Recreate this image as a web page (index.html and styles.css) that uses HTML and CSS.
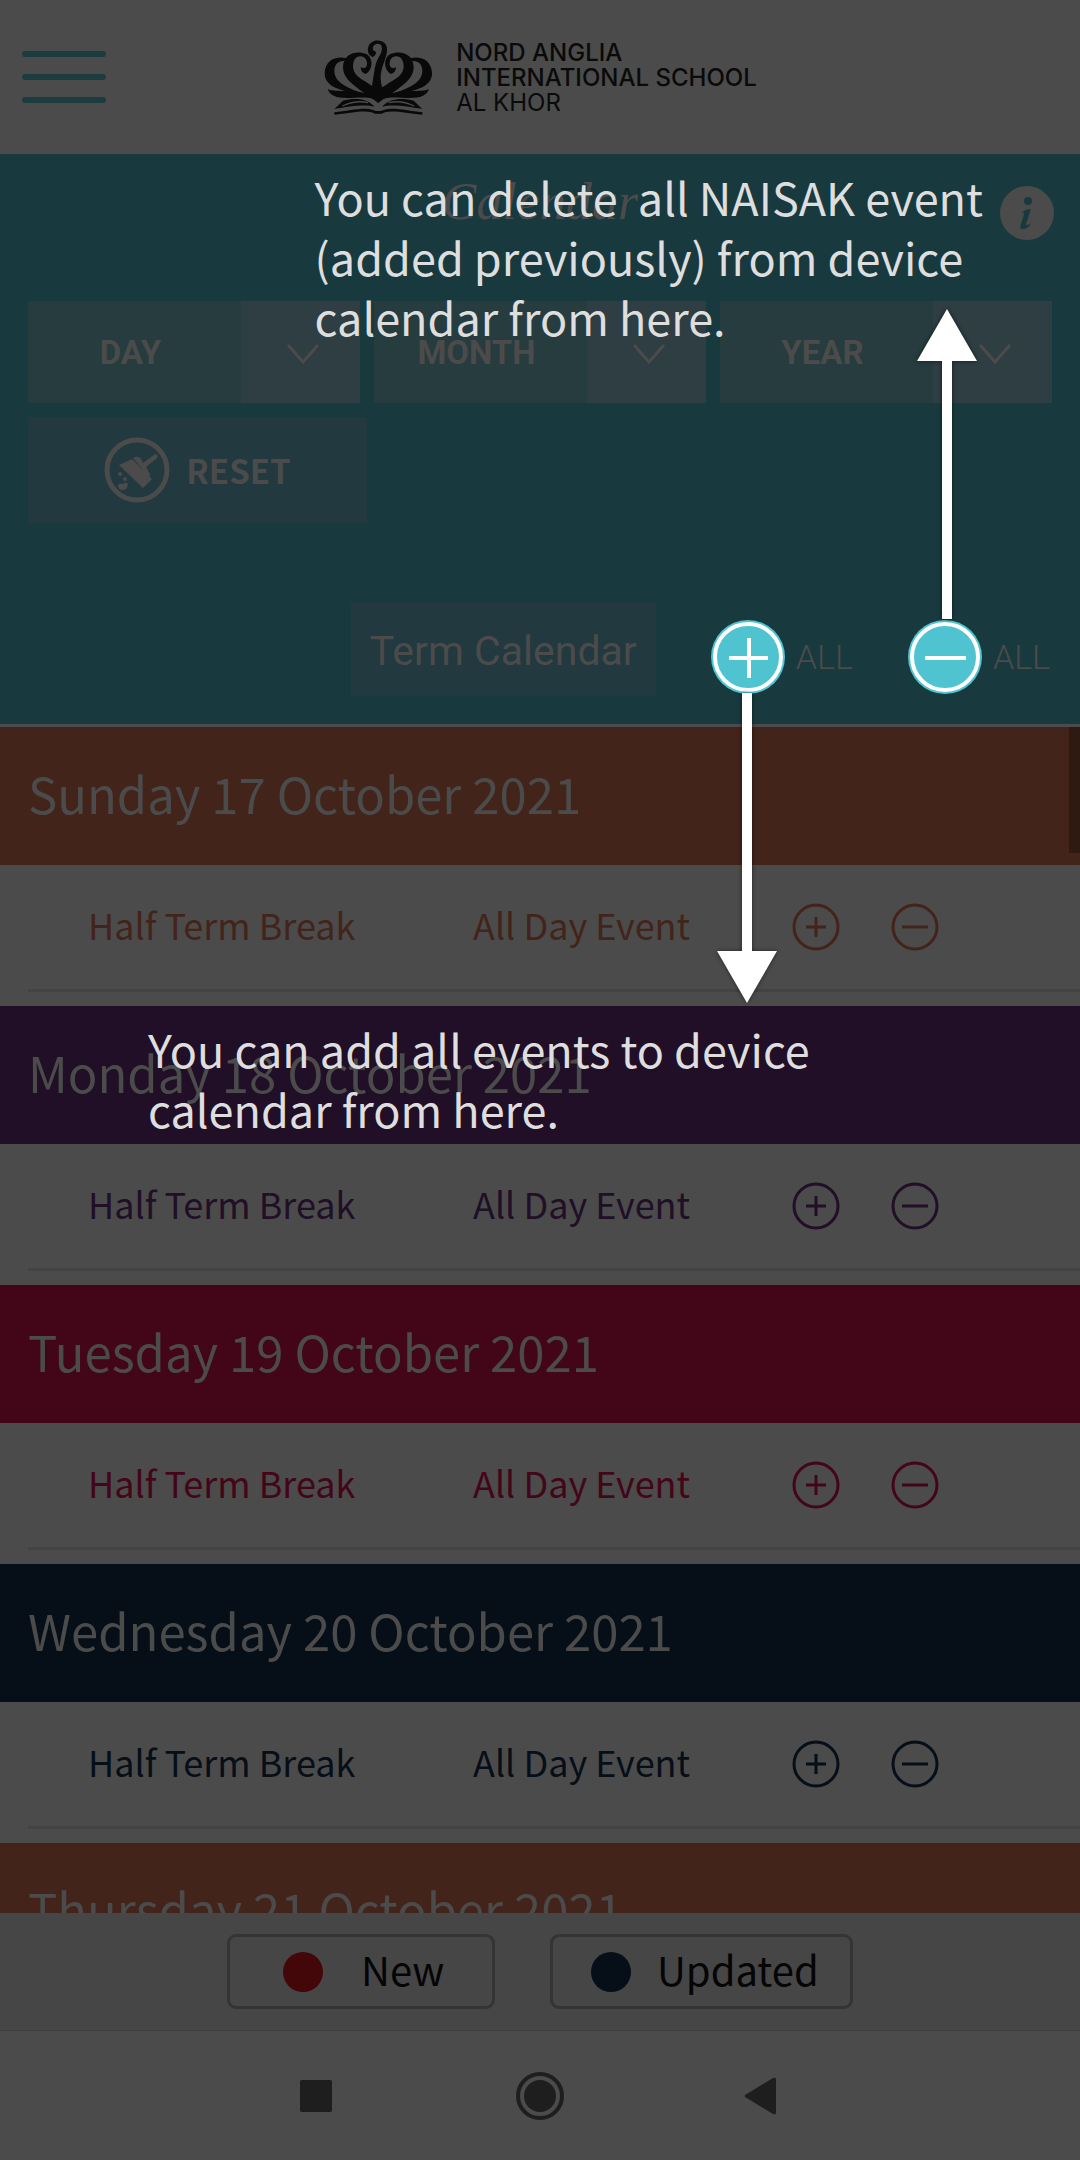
FILE: index.html
```
<!DOCTYPE html>
<html lang="en">
<head>
<meta charset="utf-8">
<meta name="viewport" content="width=device-width, initial-scale=1">
<title>Calendar – Nord Anglia International School Al Khor</title>
<link rel="stylesheet" href="styles.css">
</head>
<body>
<svg class="defs" aria-hidden="true">
  <symbol id="plus" viewBox="0 0 48 48"><circle cx="24" cy="24" r="22"/><path d="M14 24h20M24 14v20"/></symbol>
  <symbol id="minus" viewBox="0 0 48 48"><circle cx="24" cy="24" r="22"/><path d="M11 24h26"/></symbol>
  <symbol id="chevron" viewBox="0 0 34 22"><path d="M2 2l15 17L32 2"/></symbol>
</svg>

<header class="topbar">
  <button class="menu" aria-label="Menu"><span></span><span></span><span></span></button>
  <a class="brand" href="#">
    <svg class="crest" viewBox="70 55 330 231" aria-hidden="true">
      <g id="half">
        <path d="M140 113C110 105 76 118 75 158C75 195 115 211 175 217L205 226C165 205 104 195 104 150C104 130 118 119 134 121Z"/>
        <path d="M198 160C220 148 222 112 200 100C172 88 130 98 130 140C130 182 180 205 236 247V206L214 194C192 176 160 168 160 135C161 115 172 106 184 107C200 108 206 128 200 138C196 143 190 142 183 140C183 150 188 158 198 160Z"/>
        <path d="M84 205C100 215 150 207 190 216C215 222 230 230 237 248C222 228 200 230 165 231C120 234 92 230 84 205Z"/>
        <path d="M104 265L130 240C165 230 205 234 224 258C200 250 150 256 104 265Z"/>
        <path class="cut" d="M128 256C150 246 180 240 205 246"/>
        <path d="M104 275C150 270 195 258 220 268L228 271H237V279H226L216 275C190 268 150 278 104 282Z"/>
      </g>
      <use href="#half" transform="translate(472 0) scale(-1 1)"/>
      <path d="M219 109C206 104 202 90 206 78C212 62 228 58 240 60C256 62 264 76 262 90C260 115 243 140 243 170C243 192 250 205 252 225L236 247L212 225C222 180 222 130 238 108C250 90 250 70 236 69C222 68 216 80 222 90C233 92 231 102 219 109Z"/>
    </svg>
    <span class="brand-name"><strong>NORD ANGLIA</strong><strong>INTERNATIONAL SCHOOL</strong><span>AL KHOR</span></span>
  </a>
</header>

<section class="panel">
  <div class="title-row">
    <h1>Calendar</h1>
    <button class="info" aria-label="Information">
      <svg viewBox="0 0 54 54"><circle cx="27" cy="27" r="27"/><g class="glyph"><circle cx="28" cy="15" r="4"/><path d="M21 27c3-3 6-4 10-4l-5 15c0 2 2 1 5-1-2 4-5 6-8 6s-3-2-2-5l3-10c0-2-1-2-3-1z"/></g></svg>
    </button>
  </div>
  <form class="filters">
    <div class="pick"><select aria-label="Day"><option>DAY</option></select><svg class="chev"><use href="#chevron"/></svg></div>
    <div class="pick"><select aria-label="Month"><option>MONTH</option></select><svg class="chev"><use href="#chevron"/></svg></div>
    <div class="pick"><select aria-label="Year"><option>YEAR</option></select><svg class="chev"><use href="#chevron"/></svg></div>
  </form>
  <button class="reset">
    <svg viewBox="0 0 66 66" aria-hidden="true"><circle class="ring" cx="33" cy="33" r="30"/><path d="M15 28l13-6 20 20-9 9zM29 21q5-3 8 1l2 4 12-9q4 1 2 4l-11 9 3 5q2 3 0 5z"/><circle cx="16" cy="37" r="2"/><circle cx="21" cy="42" r="2"/><path d="M14 48q2-2 5-1 3-3 5 0-1 6-5 6-5 0-5-5z"/></svg>
    RESET
  </button>
  <div class="actions">
    <button class="term">Term Calendar</button>
    <button class="all"><svg viewBox="0 0 74 74" aria-hidden="true"><circle class="disc" cx="37" cy="37" r="37"/><circle class="edge" cx="37" cy="37" r="33"/><path class="edge" d="M18 38h39M38 18v40"/></svg>ALL</button>
    <button class="all"><svg viewBox="0 0 74 74" aria-hidden="true"><circle class="disc" cx="37" cy="37" r="37"/><circle class="edge" cx="37" cy="37" r="33"/><path class="edge" d="M17 38h41"/></svg>ALL</button>
  </div>
</section>

<main class="list">
  <section class="day orange">
    <h2>Sunday 17 October 2021</h2>
    <div class="event"><span class="name">Half Term Break</span><span class="time">All Day Event</span><button aria-label="Add event"><svg><use href="#plus"/></svg></button><button aria-label="Remove event"><svg><use href="#minus"/></svg></button></div>
  </section>
  <section class="day purple">
    <h2>Monday 18 October 2021</h2>
    <div class="event"><span class="name">Half Term Break</span><span class="time">All Day Event</span><button aria-label="Add event"><svg><use href="#plus"/></svg></button><button aria-label="Remove event"><svg><use href="#minus"/></svg></button></div>
  </section>
  <section class="day crimson">
    <h2>Tuesday 19 October 2021</h2>
    <div class="event"><span class="name">Half Term Break</span><span class="time">All Day Event</span><button aria-label="Add event"><svg><use href="#plus"/></svg></button><button aria-label="Remove event"><svg><use href="#minus"/></svg></button></div>
  </section>
  <section class="day navy">
    <h2>Wednesday 20 October 2021</h2>
    <div class="event"><span class="name">Half Term Break</span><span class="time">All Day Event</span><button aria-label="Add event"><svg><use href="#plus"/></svg></button><button aria-label="Remove event"><svg><use href="#minus"/></svg></button></div>
  </section>
  <section class="day orange">
    <h2>Thursday 21 October 2021</h2>
  </section>
  <div class="scroll-thumb"></div>
</main>

<ul class="legend">
  <li class="new"><i></i><span>New</span></li>
  <li class="updated"><i></i><span>Updated</span></li>
</ul>

<nav class="sysnav">
  <button aria-label="Recent apps"><svg viewBox="0 0 64 64"><rect x="16" y="16" width="32" height="32" rx="2"/></svg></button>
  <button aria-label="Home"><svg viewBox="0 0 64 64"><circle class="outline" cx="32" cy="32" r="22"/><circle cx="32" cy="32" r="16"/></svg></button>
  <button aria-label="Back"><svg viewBox="0 0 64 64"><path d="M13 31L41 14q3-1 3 1v34q0 2-3 1L13 33q-1-1 0-2z"/></svg></button>
</nav>

<div class="coach">
  <p class="tip tip-delete">You can delete&nbsp; all NAISAK event<br>(added previously) from device<br>calendar from here.</p>
  <svg class="arrow arrow-up" viewBox="0 0 64 312"><path d="M32 2l30 52H37v258H27V54H2z"/></svg>
  <svg class="arrow arrow-down" viewBox="0 0 64 312"><path d="M32 310L2 258h25V0h10v258h25z"/></svg>
  <p class="tip tip-add">You can add all events to device<br>calendar from here.</p>
</div>
</body>
</html>
```
FILE: styles.css
```
:root {
  --grey: #4b4b4b;
  --teal: #183a3e;
  --sans: "Noto Sans CJK SC", "Noto Sans", sans-serif;
}
* { box-sizing: border-box; }
body {
  position: relative;
  display: flex;
  flex-direction: column;
  height: 100vh;
  margin: 0;
  overflow: hidden;
  background: var(--grey);
  font-family: var(--sans);
}
h1, h2, p, ul { margin: 0; padding: 0; font-weight: 400; }
button, select {
  margin: 0;
  padding: 0;
  border: 0;
  border-radius: 0;
  background: none;
  color: inherit;
  font: inherit;
}
svg { display: block; }
.defs { position: absolute; width: 0; height: 0; }

/* Top bar */
.topbar {
  display: grid;
  grid-template-columns: 1fr auto 1fr;
  align-items: center;
  height: 154px;
  flex: none;
  padding: 0 22px;
}
.menu { display: grid; gap: 17px; width: 84px; }
.menu span { height: 6px; border-radius: 3px; background: #1c3c40; }
.brand { display: flex; align-items: center; gap: 23px; color: #0a0a0a; text-decoration: none; }
.crest { width: 110px; height: 77px; fill: #090909; }
.crest .cut { fill: none; stroke: var(--grey); stroke-width: 4; }
.brand-name { display: grid; font: 400 24px/25px Inter, sans-serif; }
.brand-name strong { font-weight: 500; }

/* Filter panel */
.panel {
  flex: none;
  padding: 20px 28px 14px;
  border-bottom: 3px solid var(--grey);
  background: var(--teal);
  color: var(--grey);
}
.title-row {
  display: grid;
  grid-template-columns: 1fr auto 1fr;
  height: 127px;
}
h1 { grid-column: 2; font: italic 52px/56px "Liberation Serif", serif; }
.info { justify-self: end; align-self: start; margin: 12px -2px 0 0; }
.info svg { width: 54px; height: 54px; fill: var(--grey); }
.info .glyph { fill: var(--teal); }
.filters { display: grid; grid-template-columns: repeat(3, 1fr); gap: 14px; }
.pick { display: grid; align-items: center; }
.pick > * { grid-area: 1 / 1; }
.pick select {
  width: 100%;
  height: 102px;
  padding: 2px 127px 0 0;
  appearance: none;
  background: linear-gradient(#2e3e42, #2e3e42) right / 119px 100% no-repeat #263c3e;
  font: 700 33px/40px Roboto, sans-serif;
  text-align: center;
  text-align-last: center;
}
.chev {
  justify-self: end;
  width: 34px;
  height: 22px;
  margin: 4px 40px 0 0;
  fill: none;
  stroke: var(--grey);
  stroke-width: 3;
  pointer-events: none;
}
.reset {
  display: flex;
  align-items: center;
  justify-content: center;
  gap: 16px;
  width: 339px;
  height: 106px;
  margin-top: 14px;
  background: #22393f;
  font-size: 33px;
  font-weight: 700;
}
.reset svg { width: 66px; height: 66px; fill: var(--grey); }
.reset .ring { fill: none; stroke: var(--grey); stroke-width: 5; }
.actions {
  display: flex;
  justify-content: flex-end;
  align-items: flex-start;
  margin-top: 79px;
  height: 108px;
}
.term {
  width: 305px;
  height: 94px;
  margin-right: 55px;
  padding-top: 4px;
  background: #22393f;
  font: 400 41px/48px Roboto, sans-serif;
}
.all {
  display: flex;
  align-items: center;
  gap: 11px;
  height: 108px;
  padding-top: 1px;
  font: 300 34px/40px Roboto, sans-serif;
}
.all + .all { margin: 0 2px 0 55px; }
.all svg { width: 74px; height: 74px; }
.disc { fill: #4fc4d0; }
.edge { fill: none; stroke: #fff; stroke-width: 4; }

/* Day list */
.list { position: relative; flex: 1; min-height: 0; overflow: hidden; }
.orange { --tone: #43241a; }
.purple { --tone: #200f27; }
.crimson { --tone: #430618; }
.navy { --tone: #060e18; }
.day { color: var(--tone); }
.day + .day { margin-top: 14px; }
h2 {
  height: 138px;
  padding-left: 28px;
  background: var(--tone);
  color: var(--grey);
  font-size: 49px;
  line-height: 132px;
}
.event {
  display: grid;
  grid-template-columns: 385px 319px 99px auto;
  align-items: center;
  justify-content: start;
  height: 127px;
  margin-left: 28px;
  padding-left: 60px;
  border-bottom: 3px solid #434343;
  font-size: 36px;
  line-height: 40px;
}
.event span { padding-bottom: 6px; }
.event svg { width: 48px; height: 48px; fill: none; stroke: var(--tone); stroke-width: 3; }
.scroll-thumb {
  position: absolute;
  top: 0;
  right: 0;
  width: 11px;
  height: 126px;
  background: #2f1a11;
}

/* Legend */
.legend {
  display: flex;
  justify-content: center;
  align-items: center;
  gap: 55px;
  flex: none;
  height: 117px;
  background: #464647;
  list-style: none;
}
.legend li {
  display: flex;
  align-items: center;
  height: 75px;
  border: 3px solid #343434;
  border-radius: 9px;
  color: #050505;
  font-size: 40px;
  line-height: 60px;
}
.legend span { padding-bottom: 6px; }
.legend i { width: 40px; height: 40px; border-radius: 50%; }
.new { width: 268px; padding-left: 53px; gap: 38px; }
.new i { background: #430609; }
.updated { width: 303px; padding-left: 38px; gap: 26px; }
.updated i { background: #060f18; }

/* System navigation */
.sysnav {
  display: flex;
  justify-content: center;
  align-items: center;
  gap: 160px;
  flex: none;
  height: 130px;
  border-top: 1px solid #3f3f3f;
}
.sysnav svg { width: 64px; height: 64px; fill: #1e1e1e; }
.sysnav .outline { fill: none; stroke: #1e1e1e; stroke-width: 4; }

/* Coach marks above the page */
.coach { position: absolute; inset: 0; pointer-events: none; }
.tip { position: absolute; color: #dedede; font-size: 45px; line-height: 60px; white-space: nowrap; }
.tip-delete { top: 167px; right: 97px; }
.tip-add { top: 1019px; left: 148px; }
.arrow { position: absolute; width: 64px; height: 312px; fill: #fff; filter: drop-shadow(0 0 2px #0008); }
.arrow-up { top: 307px; right: 101px; }
.arrow-down { top: 693px; right: 301px; }
```
